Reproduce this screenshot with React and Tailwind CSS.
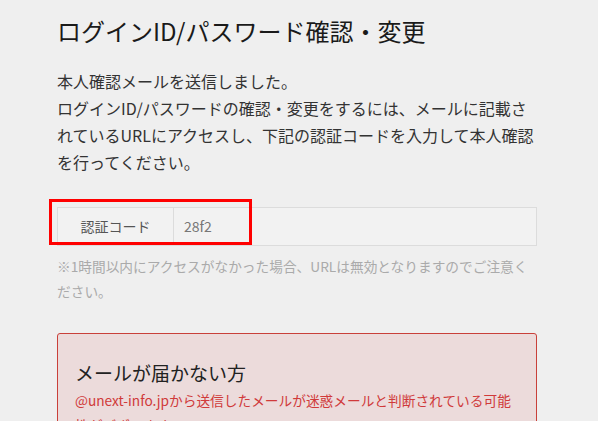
import React from "react";

export default function App() {
  return (
    <div
      className="min-h-screen bg-[#efefef]"
      style={{ fontFamily: '"Noto Sans CJK JP", "Noto Sans", sans-serif' }}
    >
      <div className="ml-[57px] w-[480px] pt-[13px]">
        <h1 className="text-[24px] leading-[36px] font-normal text-[#1a1a1a]">
          ログインID/パスワード確認・変更
        </h1>
        <p className="mt-[18.5px] text-[16px] leading-[27px] text-[#333]">
          本人確認メールを送信しました。
          <br />
          ログインID/パスワードの確認・変更をするには、メールに記載されているURLにアクセスし、下記の認証コードを入力して本人確認を行ってください。
        </p>

        <div className="relative mt-[31.5px]">
          <div className="flex h-[39px] border border-[#dcdcdc] bg-[#f2f2f2]">
            <div className="flex w-[116px] items-center justify-center border-r border-[#dcdcdc] text-[14px] text-[#555]">
              認証コード
            </div>
            <div className="flex items-center pl-[10px] text-[14px] text-[#777]">
              28f2
            </div>
          </div>
          <div className="pointer-events-none absolute left-[-8px] top-[-8px] h-[46px] w-[203px] border-[3px] border-[#ff0000]" />
        </div>

        <p className="mt-[7.5px] text-[13.7px] leading-[25px] text-[#aaa]">
          ※1時間以内にアクセスがなかった場合、URLは無効となりますのでご注意ください。
        </p>

        <div className="mt-[29.5px] rounded-[3px] border border-[#c9403a] bg-[#ecdbdb] px-[17px] pt-[25px] pb-[24px]">
          <h2 className="text-[19px] leading-[28.5px] font-normal text-[#222]">
            メールが届かない方
          </h2>
          <p className="text-[13.7px] leading-[25px] text-[#d03a3a]">
            @unext-info.jpから送信したメールが迷惑メールと判断されている可能性がございます。
          </p>
        </div>
      </div>
    </div>
  );
}
